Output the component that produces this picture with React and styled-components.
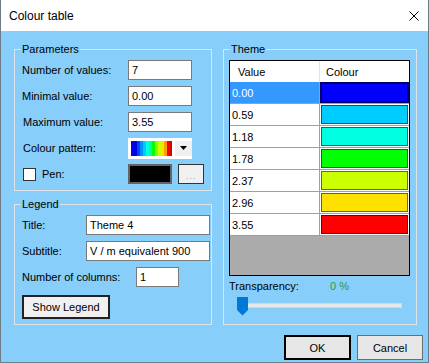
import React from "react";
import styled, { createGlobalStyle } from "styled-components";

const GlobalStyle = createGlobalStyle`
  html, body { margin: 0; padding: 0; background: #ffffff; }
  body { font-family: "Liberation Sans", Arial, sans-serif; font-size: 11px; color: #000; }
  * { box-sizing: border-box; }
`;

const Window = styled.div`
  width: 429px;
  height: 363px;
  display: flex;
  flex-direction: column;
  border: 1px solid #6f7c88;
  border-top: none;
  background: #87cefa;
`;

const TitleBar = styled.div`
  height: 31px;
  flex: none;
  background: #ffffff;
  display: flex;
  align-items: center;
  justify-content: space-between;
  padding: 0 8px 0 8px;
`;

const TitleText = styled.span`
  font-family: "Liberation Sans", Arial, sans-serif;
  font-size: 12px;
  color: #000;
`;

const CloseIcon = styled.svg`
  width: 10px;
  height: 10px;
  margin-right: 1px;
  display: block;
`;

const Body = styled.div`
  flex: 1;
  display: flex;
  flex-direction: column;
  padding: 18px 0 2px 0;
`;

const Main = styled.div`
  display: grid;
  grid-template-columns: 198px 194px;
  column-gap: 11px;
  padding: 0 11px 0 13px;
`;

const LeftColumn = styled.div`
  display: flex;
  flex-direction: column;
  gap: 13px;
`;

const GroupBox = styled.div`
  position: relative;
  border: 1px solid #e0e4e8;
  height: ${(p) => p.$height}px;
  padding: ${(p) => p.$padding};
  display: flex;
  flex-direction: column;
`;

const GroupTitle = styled.span`
  position: absolute;
  top: -7px;
  left: 6px;
  padding: 0 1px;
  line-height: 13px;
  background: #87cefa;
`;

const Rows = styled.div`
  display: flex;
  flex-direction: column;
  gap: 6px;
`;

const FieldRow = styled.div`
  display: flex;
  align-items: center;
  height: 20px;
`;

const Label = styled.span`
  width: ${(p) => p.$width}px;
  flex: none;
  padding-left: ${(p) => p.$indent || 0}px;
  display: flex;
  align-items: center;
  white-space: nowrap;
`;

const TextBox = styled.div`
  width: ${(p) => p.$width}px;
  height: 20px;
  background: #ffffff;
  border: 1px solid #7a7a7a;
  padding: 0 3px;
  display: flex;
  align-items: center;
  font-size: 11px;
  white-space: nowrap;
  overflow: hidden;
`;

const Combo = styled.div`
  width: 64px;
  height: 21px;
  background: #ffffff;
  display: flex;
  align-items: center;
  padding: 3px 0 3px 3px;
  gap: 3px;
`;

const Gradient = styled.div`
  width: 41px;
  height: 15px;
  background: linear-gradient(
    to right,
    #0000ff 0 3px, #0000d8 3px 6px, #0044ff 6px 9px, #0090ff 9px 12px,
    #00ccff 12px 15px, #00ffdd 15px 18px, #00ff99 18px 21px, #00ff00 21px 24px,
    #88ff00 24px 27px, #ccff00 27px 30px, #ffe100 30px 33px, #ffa000 33px 36px,
    #ff0000 36px 39px, #d80000 39px 41px
  );
`;

const DropButton = styled.div`
  flex: 1;
  align-self: stretch;
  background: #f0f0f0;
  display: flex;
  align-items: center;
  justify-content: center;
`;

const Caret = styled.svg`
  width: 7px;
  height: 4px;
  display: block;
`;

const CheckBox = styled.span`
  width: 13px;
  height: 13px;
  background: #ffffff;
  border: 1px solid #333333;
  margin-right: 6px;
`;

const ColorBox = styled.div`
  width: 44px;
  height: 20px;
  background: #000000;
  border: 2px solid #646464;
`;

const EllipsisButton = styled.div`
  width: 26px;
  height: 20px;
  margin-left: 6px;
  background: #f0f0f0;
  border: 1px solid #333333;
  color: #a9a0b8;
  font-size: 9px;
  display: flex;
  align-items: flex-end;
  justify-content: center;
  padding-bottom: 2px;
  letter-spacing: 1px;
`;

const Button = styled.div`
  width: ${(p) => p.$width}px;
  height: ${(p) => p.$height}px;
  background: ${(p) => (p.$flat ? "#f0f0f0" : "#e6e6e6")};
  border: ${(p) => (p.$default ? "2px solid #000" : p.$flat ? "2px solid #222" : "1px solid #6d6d6d")};
  display: flex;
  align-items: center;
  justify-content: center;
  font-size: 11px;
  margin-top: ${(p) => p.$top || 0}px;
`;

const Grid = styled.div`
  width: 181px;
  height: 216px;
  border: 1px solid #000000;
  display: flex;
  flex-direction: column;
  background: #ababab;
`;

const GridRow = styled.div`
  display: flex;
  height: ${(p) => (p.$header ? 21 : 22)}px;
  border-bottom: ${(p) => (p.$header ? "none" : "1px solid #a0a0a0")};
  background: #ffffff;
`;

const Cell = styled.div`
  width: ${(p) => p.$width}px;
  flex: none;
  display: flex;
  align-items: center;
  padding-left: ${(p) => p.$pad}px;
  border-right: ${(p) => (p.$divider ? `1px solid ${p.$header ? "#e3e3e3" : "#a0a0a0"}` : "none")};
  background: ${(p) => (p.$selected ? "#3399ff" : "#ffffff")};
  color: ${(p) => (p.$selected ? "#ffffff" : "#000000")};
  font-size: 11px;
`;

const SwatchCell = styled.div`
  flex: 1;
  padding: 1px;
  display: flex;
  background: ${(p) => (p.$selected ? "#3399ff" : "#ffffff")};
`;

const Swatch = styled.div`
  flex: 1;
  background: ${(p) => p.$color};
  border: ${(p) => (p.$selected ? "2px solid #000060" : "1px solid rgba(0,0,0,0.55)")};
  margin: ${(p) => (p.$selected ? "-1px" : "0")};
`;

const Filler = styled.div`
  flex: 1;
  background: #ababab;
`;

const TransRow = styled.div`
  display: flex;
  align-items: center;
  height: 13px;
  margin-top: 3px;
`;

const Percent = styled.span`
  color: #2e9a3a;
  font-size: 11px;
`;

const Slider = styled.div`
  position: relative;
  width: 165px;
  height: 19px;
  margin: 5px 0 0 8px;
`;

const Track = styled.div`
  position: absolute;
  left: 3px;
  right: 0;
  top: 6px;
  height: 5px;
  background: #e7e7e7;
  border: 1px solid #d6d6d6;
`;

const Thumb = styled.svg`
  position: absolute;
  left: 0;
  top: 0;
  width: 11px;
  height: 19px;
`;

const Footer = styled.div`
  display: flex;
  justify-content: flex-end;
  gap: 6px;
  padding: 10px 5px 0 0;
`;

const rows = [
  { v: "0.00", c: "#0000ff", sel: true },
  { v: "0.59", c: "#00ccff" },
  { v: "1.18", c: "#00ffe0" },
  { v: "1.78", c: "#00ff00" },
  { v: "2.37", c: "#ccff00" },
  { v: "2.96", c: "#ffe100" },
  { v: "3.55", c: "#ff0000" },
];

export default function App() {
  return (
    <>
      <GlobalStyle />
      <Window>
        <TitleBar>
          <TitleText>Colour table</TitleText>
          <CloseIcon viewBox="0 0 10 10">
            <path d="M0.5 0.5 L9.5 9.5 M9.5 0.5 L0.5 9.5" stroke="#000" strokeWidth="1" fill="none" />
          </CloseIcon>
        </TitleBar>
        <Body>
          <Main>
            <LeftColumn>
              <GroupBox $height={142} $padding="10px 0 0 7px">
                <GroupTitle>Parameters</GroupTitle>
                <Rows>
                  <FieldRow>
                    <Label $width={106}>Number of values:</Label>
                    <TextBox $width={64}>7</TextBox>
                  </FieldRow>
                  <FieldRow>
                    <Label $width={106}>Minimal value:</Label>
                    <TextBox $width={64}>0.00</TextBox>
                  </FieldRow>
                  <FieldRow>
                    <Label $width={106} $indent={1}>Maximum value:</Label>
                    <TextBox $width={64}>3.55</TextBox>
                  </FieldRow>
                  <FieldRow>
                    <Label $width={106} $indent={1}>Colour pattern:</Label>
                    <Combo>
                      <Gradient />
                      <DropButton>
                        <Caret viewBox="0 0 7 4">
                          <polygon points="0,0 7,0 3.5,4" fill="#000" />
                        </Caret>
                      </DropButton>
                    </Combo>
                  </FieldRow>
                  <FieldRow>
                    <Label $width={106} $indent={1}>
                      <CheckBox />
                      Pen:
                    </Label>
                    <ColorBox />
                    <EllipsisButton>...</EllipsisButton>
                  </FieldRow>
                </Rows>
              </GroupBox>
              <GroupBox $height={121} $padding="10px 0 0 7px">
                <GroupTitle>Legend</GroupTitle>
                <Rows>
                  <FieldRow>
                    <Label $width={64}>Title:</Label>
                    <TextBox $width={124}>Theme 4</TextBox>
                  </FieldRow>
                  <FieldRow>
                    <Label $width={64}>Subtitle:</Label>
                    <TextBox $width={124}>V / m equivalent 900</TextBox>
                  </FieldRow>
                  <FieldRow>
                    <Label $width={114}>Number of columns:</Label>
                    <TextBox $width={43}>1</TextBox>
                  </FieldRow>
                </Rows>
                <Button $width={88} $height={24} $top={8} $flat>Show Legend</Button>
              </GroupBox>
            </LeftColumn>
            <GroupBox $height={276} $padding="10px 0 0 5px">
              <GroupTitle>Theme</GroupTitle>
              <Grid>
                <GridRow $header>
                  <Cell $width={90} $pad={8} $divider $header>Value</Cell>
                  <Cell $width={89} $pad={6} $header>Colour</Cell>
                </GridRow>
                {rows.map((r) => (
                  <GridRow key={r.v}>
                    <Cell $width={90} $pad={2} $divider $selected={r.sel}>{r.v}</Cell>
                    <SwatchCell $selected={r.sel}>
                      <Swatch $color={r.c} $selected={r.sel} />
                    </SwatchCell>
                  </GridRow>
                ))}
                <Filler />
              </Grid>
              <TransRow>
                <Label $width={101}>Transparency:</Label>
                <Percent>0 %</Percent>
              </TransRow>
              <Slider>
                <Track />
                <Thumb viewBox="0 0 11 19">
                  <polygon points="0,0 11,0 11,13 5.5,18.5 0,13" fill="#0078d7" />
                </Thumb>
              </Slider>
            </GroupBox>
          </Main>
          <Footer>
            <Button $width={67} $height={25} $default>OK</Button>
            <Button $width={66} $height={25}>Cancel</Button>
          </Footer>
        </Body>
      </Window>
    </>
  );
}
